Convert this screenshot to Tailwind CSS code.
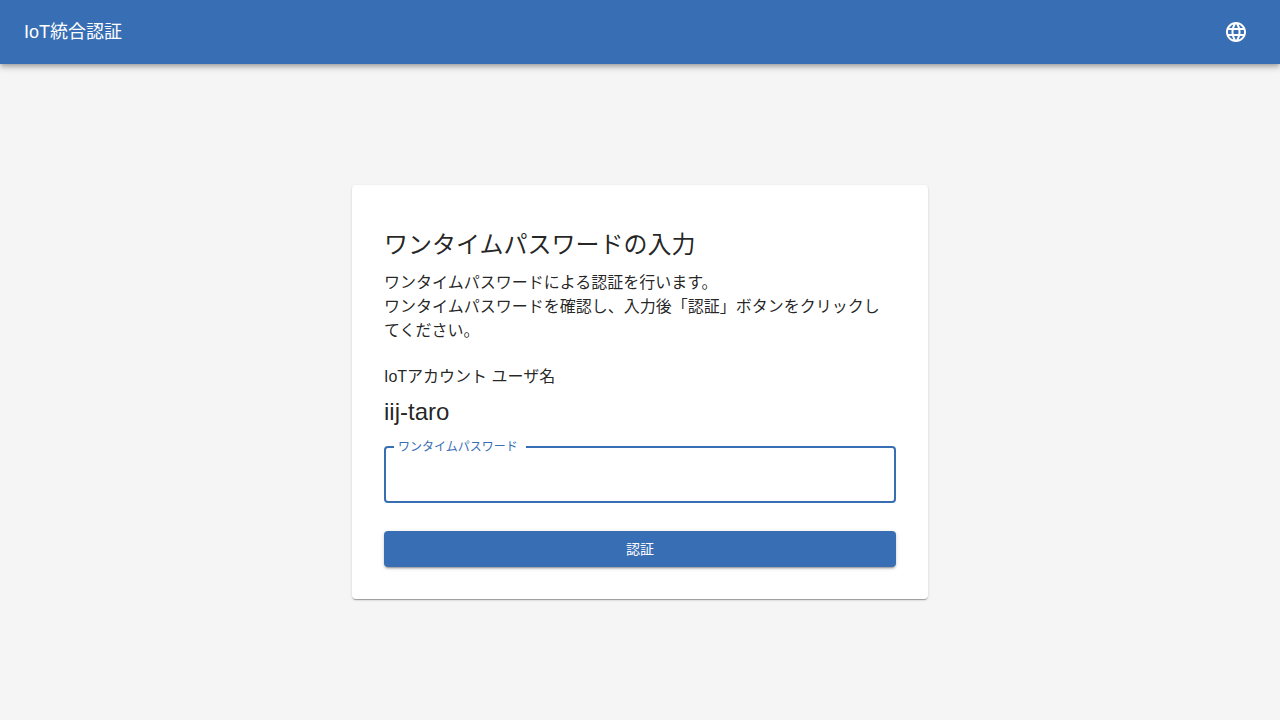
<!DOCTYPE html>
<html lang="ja">
<head>
  <meta charset="UTF-8" />
  <title>IoT統合認証</title>
  <meta name="viewport" content="width=device-width, initial-scale=1.0" />
  <script src="https://cdn.jsdelivr.net/npm/@tailwindcss/browser@4"></script>
  <style>
    body {
      font-family: "Liberation Sans", "Noto Sans CJK JP", sans-serif;
    }
  </style>
</head>
<body class="min-h-screen flex flex-col bg-[#f5f5f5] text-black/87">
  <header class="h-16 pl-6 pr-5 flex items-center justify-between bg-[#386eb4] text-white shadow-[0_2px_4px_-1px_rgba(0,0,0,0.2),0_4px_5px_0_rgba(0,0,0,0.14),0_1px_10px_0_rgba(0,0,0,0.12)]">
    <div class="text-lg">IoT統合認証</div>
    <button type="button" aria-label="言語" class="p-3 rounded-full hover:bg-white/10">
      <svg class="size-6" viewBox="0 0 24 24" fill="currentColor" aria-hidden="true">
        <path d="M11.99 2C6.47 2 2 6.48 2 12s4.47 10 9.99 10C17.52 22 22 17.52 22 12S17.52 2 11.99 2zm6.93 6h-2.95c-.32-1.25-.78-2.45-1.38-3.56 1.84.63 3.37 1.91 4.33 3.56zM12 4.04c.83 1.2 1.48 2.53 1.91 3.96h-3.82c.43-1.43 1.08-2.76 1.91-3.96zM4.26 14C4.1 13.36 4 12.69 4 12s.1-1.36.26-2h3.38c-.08.66-.14 1.32-.14 2s.06 1.34.14 2H4.26zm.82 2h2.95c.32 1.25.78 2.45 1.38 3.56-1.84-.63-3.37-1.9-4.33-3.56zm2.95-8H5.08c.96-1.66 2.49-2.93 4.33-3.56C8.81 5.55 8.35 6.75 8.03 8zM12 19.96c-.83-1.2-1.48-2.53-1.91-3.96h3.82c-.43 1.43-1.08 2.76-1.91 3.96zM14.34 14H9.66c-.09-.66-.16-1.32-.16-2s.07-1.35.16-2h4.68c.09.65.16 1.32.16 2s-.07 1.34-.16 2zm.25 5.56c.6-1.11 1.06-2.31 1.38-3.56h2.95c-.96 1.65-2.49 2.93-4.33 3.56zM16.36 14c.08-.66.14-1.32.14-2s-.06-1.34-.14-2h3.38c.16.64.26 1.31.26 2s-.1 1.36-.26 2h-3.38z" />
      </svg>
    </button>
  </header>

  <main class="grow flex items-center justify-center">
    <div class="w-full max-w-xl px-8 pt-11 pb-8 bg-white rounded shadow-[0_2px_1px_-1px_rgba(0,0,0,0.2),0_1px_1px_0_rgba(0,0,0,0.14),0_1px_3px_0_rgba(0,0,0,0.12)]">
      <h1 class="text-2xl leading-8">ワンタイムパスワードの入力</h1>
      <p class="mt-2.5 pr-2 text-base leading-6">
        ワンタイムパスワードによる認証を行います。<br />
        ワンタイムパスワードを確認し、入力後「認証」ボタンをクリックしてください。
      </p>

      <p class="mt-[22px] text-base leading-6">IoTアカウント ユーザ名</p>
      <p class="mt-[7px] text-2xl leading-8">iij-taro</p>

      <form id="otp-form">
        <fieldset class="mt-[13px] px-2 border-2 border-[#386eb4] rounded">
          <legend class="h-3 pl-1 pr-2 text-xs leading-3 text-[#386eb4]">
            <label for="otp" class="block">ワンタイムパスワード</label>
          </legend>
          <input type="password" id="otp" name="otp" required autocomplete="one-time-code" class="block w-full h-12 px-1 text-base bg-transparent focus:outline-none" />
        </fieldset>
        <button type="submit" class="mt-7 w-full h-9 text-sm text-white bg-[#386eb4] hover:bg-[#274d7d] rounded shadow-[0_3px_1px_-2px_rgba(0,0,0,0.2),0_2px_2px_0_rgba(0,0,0,0.14),0_1px_5px_0_rgba(0,0,0,0.12)]">
          認証
        </button>
      </form>
    </div>
  </main>
</body>
</html>
